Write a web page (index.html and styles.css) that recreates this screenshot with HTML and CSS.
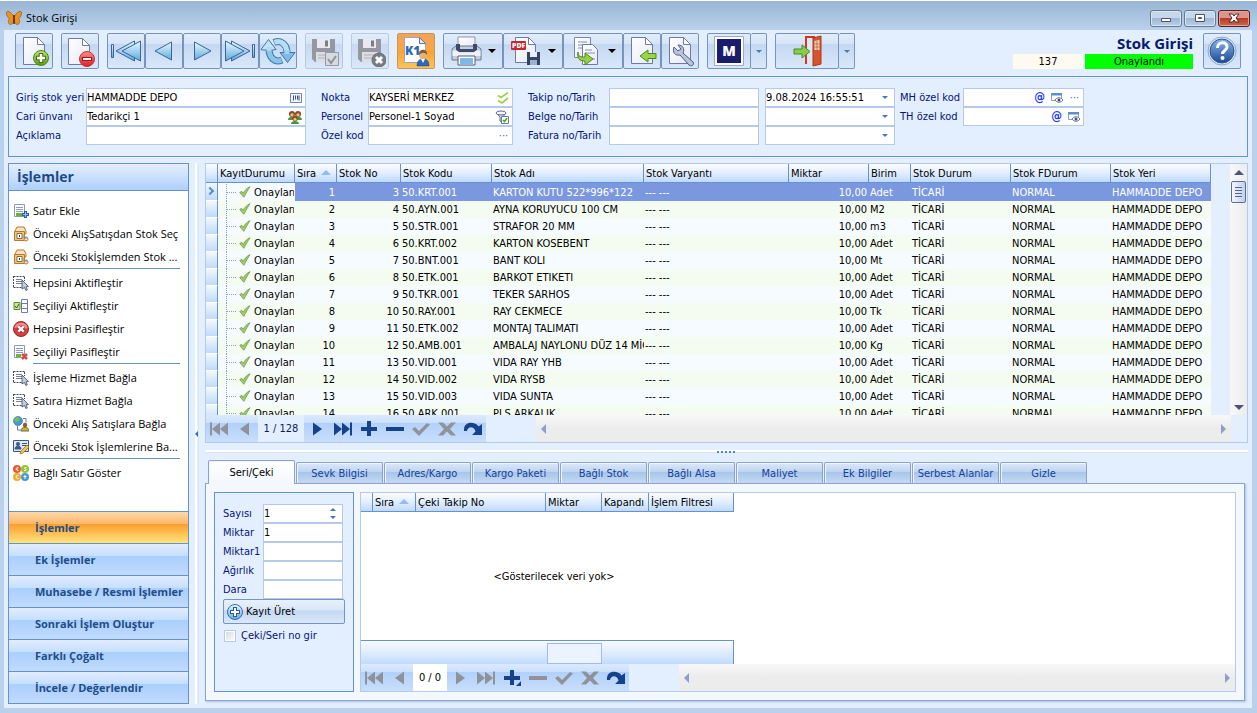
FILE: index.html
```html
<!DOCTYPE html>
<html lang="tr">
<head>
<meta charset="utf-8">
<title>Stok Girişi</title>
<link rel="stylesheet" href="styles.css">
</head>
<body>
<svg class="sprite" width="0" height="0" aria-hidden="true">
  <defs>
    <linearGradient id="gBlue" x1="0" y1="0" x2="0" y2="1"><stop offset="0" stop-color="#e9f8ff"/><stop offset="1" stop-color="#5faadb"/></linearGradient>
    <linearGradient id="gPage" x1="0" y1="0" x2="1" y2="1"><stop offset="0" stop-color="#fff"/><stop offset="1" stop-color="#e6e9f6"/></linearGradient>
    <linearGradient id="gGreen" x1="0" y1="0" x2="0" y2="1"><stop offset="0" stop-color="#c3e676"/><stop offset="1" stop-color="#5c9a14"/></linearGradient>
    <linearGradient id="gRed" x1="0" y1="0" x2="0" y2="1"><stop offset="0" stop-color="#ff8f84"/><stop offset="1" stop-color="#d91f28"/></linearGradient>
    <linearGradient id="gHelp" x1="0" y1="0" x2="0" y2="1"><stop offset="0" stop-color="#8cb4e6"/><stop offset="1" stop-color="#1b4a96"/></linearGradient>
  </defs>
  <symbol id="new" viewBox="0 0 32 32"><path d="M5.500 2.500h14l7 7v20h-21z" fill="url(#gPage)" stroke="#6d7ba6"/><path d="M19.500 2.500v7h7z" fill="#fff" stroke="#6d7ba6"/><circle cx="23" cy="23" r="7.500" fill="url(#gGreen)" stroke="#4f8512"/><path d="M23 18v10M18 23h10" stroke="#3f7012" stroke-width="4.500"/><path d="M23 19v8M19 23h8" stroke="#fff" stroke-width="2.500"/></symbol>
  <symbol id="del" viewBox="0 0 32 32"><path d="M4.500 3.500h14l7 7v19h-21z" fill="url(#gPage)" stroke="#6d7ba6"/><path d="M18.500 3.500v7h7z" fill="#fff" stroke="#6d7ba6"/><circle cx="23" cy="24" r="7.500" fill="url(#gRed)" stroke="#cf2f38"/><path d="M18 24h10" stroke="#a2141c" stroke-width="4"/><path d="M19 24h8" stroke="#fff" stroke-width="2"/></symbol>
  <symbol id="first" viewBox="0 0 36 32"><g fill="url(#gBlue)" stroke="#38649c"><path d="M3.500 9.500h2v13h-2z"/><path d="M26.500 6v20L8 16z"/><path d="M32.500 6v20L14 16z"/></g></symbol>
  <symbol id="prev" viewBox="0 0 36 32"><path d="M25.500 7v18L9 16z" fill="url(#gBlue)" stroke="#38649c"/></symbol>
  <symbol id="sync" viewBox="0 0 36 32"><g fill="none"><path d="M14 7.500c7-3 13 2 13 10" stroke="#3f78ad" stroke-width="7"/><path d="M22 25c-7 3-13-2-13-11" stroke="#3f78ad" stroke-width="7"/><path d="M14.500 7.300c6.500-2.500 12.500 2 12.500 11" stroke="#b9def3" stroke-width="5"/><path d="M21.500 25.200c-6.500 2.500-12.500-2-12.500-12" stroke="#8cc4e6" stroke-width="5"/></g><path d="M8.500 4.500l7.500 10-3.500.5H3l-2-.5z" fill="#c3e4f6" stroke="#3f78ad"/><path d="M27.500 27.500l-7.500-10h15z" fill="#7dbbe2" stroke="#3f78ad"/><path d="M6.500 12h5v4h-5z" fill="#b4dbf1"/><path d="M24.500 15h5v4h-5z" fill="#a4d1ec"/></symbol>
  <symbol id="floppy" viewBox="0 0 32 32"><path d="M4 4h23v23H7l-3-3z" fill="#8d8f96"/><path d="M9 4h13v9H9z" fill="#e9eaee"/><path d="M17 5.500h3v6h-3z" fill="#70727a"/><path d="M8 17h16v10H8z" fill="#dcdde2"/><path d="M10 20h12M10 23h12" stroke="#a9abb3"/></symbol>
  <symbol id="print" viewBox="0 0 32 32"><path d="M8 2h17v12H8z" fill="url(#gPage)" stroke="#8b97b6"/><path d="M2 14l4-3h21l4 3v11H2z" fill="#c3cddd" stroke="#6b7894"/><path d="M6 9h4v5h13V9h4v6l-3 2H9l-3-2z" fill="#3d4a6b"/><path d="M2.500 15.500h4l3 2h14l3-2h4v5.500h-28z" fill="#eef2f8"/><path d="M8 21h17v9H8z" fill="#fff" stroke="#4e5d80"/><path d="M10 23h13v6H10z" fill="#7cb8e8"/></symbol>
  <symbol id="copy" viewBox="0 0 32 32"><path d="M4.500 2.500h16v20h-16z" fill="url(#gPage)" stroke="#7886ac"/><path d="M8 7h9M8 10h7M8 13h7" stroke="#8290b5"/><path d="M12.500 9.500h10l5 5v15h-15z" fill="url(#gPage)" stroke="#6d7ba6"/><path d="M15 15h7M15 18h10M20 24h5" stroke="#8290b5"/><path d="M8 17c0 5 3 5 7 5v-4l8 6-8 6v-4c-6 0-8-3-7-9z" fill="#96cf45" stroke="#4d8a16"/></symbol>
  <symbol id="import" viewBox="0 0 32 32"><path d="M5.500 2.500h14l7 7v19h-21z" fill="url(#gPage)" stroke="#6d7ba6"/><path d="M19.500 2.500v7h7z" fill="#fff" stroke="#6d7ba6"/><path d="M14 21l8-6v3.500h8v5h-8V27z" fill="#9bd44c" stroke="#4d8a16"/></symbol>
  <symbol id="wrench" viewBox="0 0 32 32"><path d="M5.500 2.500h14l7 7v19h-21z" fill="url(#gPage)" stroke="#6d7ba6"/><path d="M19.500 2.500v7h7z" fill="#fff" stroke="#6d7ba6"/><path d="M14 10c5 0 7 4 5 8l10 9c2 3-2 5-4 3l-9-10c-5 1-8-3-6-8l4 4 3-2z" fill="#bac5dc" stroke="#4c5c86"/></symbol>
  <symbol id="exit" viewBox="0 0 32 32"><path d="M15 2h9v27h-9z" fill="#dbe8fa"/><path d="M15 29V2h9" fill="none" stroke="#d0391f" stroke-width="2"/><path d="M22 3l8-2v28l-8 2z" fill="#d9522c" stroke="#a9361a"/><path d="M23.500 6l5-1v10h-5z" fill="#f2d6b8"/><path d="M26 6v9M23.500 9h5M23.500 12h5" stroke="#a9361a" stroke-width=".6"/><path d="M3 14h8v-4l8 6.500-8 6.500v-4H3z" fill="#8bcb4b" stroke="#4a8a1c"/></symbol>
  <symbol id="help" viewBox="0 0 32 32"><circle cx="16" cy="16" r="14" fill="#d7e6f8" stroke="#8fa7cb"/><circle cx="16" cy="16" r="12" fill="url(#gHelp)" stroke="#2b5798"/><path d="M11.500 13c0-7 10-6.500 9.500-1 0 3.500-4.500 3.500-4.500 7" fill="none" stroke="#fff" stroke-width="3"/><circle cx="16.500" cy="23" r="2" fill="#fff"/></symbol>
  <symbol id="butterfly" viewBox="0 0 16 16"><path d="M8 7C6 3 2 0 .5 2 0 5 2 8 3.500 8.500 1 11 3 15 5 14.500 7 14 7.500 11 8 9c.5 2 1 5 3 5.500 2 .5 4-3.500 1.500-6C14 8 16 5 15.500 2 14 0 10 3 8 7z" fill="#f0901c" stroke="#8a5116" stroke-width=".6"/><path d="M8 5v9" stroke="#3e2a14" stroke-width="1.500"/></symbol>
  <symbol id="add" viewBox="0 0 16 16"><path d="M1.500 1.500h10v12h-10z" fill="#fff" stroke="#8a97ba"/><path d="M3 4.500h7M3 6.500h7M3 8.500h7" stroke="#8b9bc3"/><path d="M3 10h6v3H3z" fill="#64b437"/><path d="M12.500 8v7M9 11.500h7" stroke="#275fa8" stroke-width="3"/><path d="M12.500 9v5M10 11.500h5" stroke="#8cc0f0"/></symbol>
  <symbol id="box" viewBox="0 0 16 16"><path d="M2 5l2-4h7l2 4v3H2z" fill="#f9e2bd" stroke="#b67a2c"/><path d="M1.500 5.500h10v9h-10z" fill="#f4c57e" stroke="#b67a2c"/><path d="M4 7.500h5v5H4z" fill="#fff" stroke="#8e6a3a"/><path d="M6 9h1v2H6z" fill="#345"/><circle cx="13" cy="13" r="2" fill="#fff0cf" stroke="#b67a2c"/><path d="M11 9v3h3" fill="none" stroke="#6e86b5"/></symbol>
  <symbol id="select" viewBox="0 0 16 16"><path d="M.5 1.500h11M.5 12.500h8M.5 1v12M11.500 2v4" stroke="#3c4661" stroke-dasharray="2 1" fill="none"/><path d="M3 4.500h6M3 6.500h6M3 8.500h6" stroke="#7782a0"/><path d="M9 5l6.500 6.500-2.500.3 1.300 3-1.500.7-1.300-3L9 14z" fill="#c3ccdf" stroke="#3c4661" stroke-width=".8"/></symbol>
  <symbol id="cells" viewBox="0 0 16 16"><path d="M8.500 1.500h6v13h-6zM8.500 5.500h6M8.500 10.500h6" fill="#fff" stroke="#6a7cab"/><path d="M1 4.500h6v7H1z" fill="#cbe59c" stroke="#5d8f22"/><path d="M2 8l1.500 2L6 6" fill="none" stroke="#31600b"/></symbol>
  <symbol id="cross" viewBox="0 0 16 16"><circle cx="8" cy="8" r="7.500" fill="#d83c3c" stroke="#9d2629"/><path d="M1.500 7C2 0 14 0 14.500 7 10 9 6 5 1.500 7z" fill="#ee8d87"/><path d="M5.300 5.300l5.400 5.400M10.700 5.300l-5.400 5.400" stroke="#8d2024" stroke-width="4"/><path d="M5.300 5.300l5.400 5.400M10.700 5.300l-5.400 5.400" stroke="#fff" stroke-width="2.400"/></symbol>
  <symbol id="listdel" viewBox="0 0 16 16"><path d="M1.500 1.500h10v12h-10z" fill="#fff" stroke="#8a97ba"/><path d="M3 4.500h7M3 6.500h7M3 8.500h7" stroke="#8b9bc3"/><path d="M3 10h5v3H3z" fill="#64b437"/><path d="M9 10l5 5M14 10l-5 5" stroke="#d94a4c" stroke-width="2.500"/></symbol>
  <symbol id="globe" viewBox="0 0 16 16"><circle cx="5" cy="5" r="4.500" fill="#4796d8" stroke="#2a65a5" stroke-width=".6"/><path d="M3 1l4 1-1 3-3 1-2-2z" fill="#74c255"/><path d="M10 2.500h3v4M4.500 10v4h3" fill="none" stroke="#627db2"/><circle cx="12" cy="9" r="2.200" fill="#8a5d2e"/><path d="M8 15c0-5 8-5 8 0z" fill="#e7a43c" stroke="#527c2c"/></symbol>
  <symbol id="card" viewBox="0 0 16 16"><path d="M.5 1.500h15v11H.5z" fill="#dbe8fa" stroke="#3c5690"/><circle cx="5" cy="5" r="2" fill="#3c5690"/><path d="M2 10c0-4 6-4 6 0zM9 4.500h5M9 6.500h4" fill="#3c5690" stroke="#3c5690"/><path d="M14 6l2 2-6 6-3 1 1-3z" fill="#f7c545" stroke="#91661a" stroke-width=".7"/></symbol>
  <symbol id="coins" viewBox="0 0 16 16"><circle cx="4" cy="4" r="4" fill="#ea5a32"/><circle cx="12" cy="4" r="4" fill="#91c53c"/><circle cx="4" cy="12" r="4" fill="#edaf31"/><circle cx="12" cy="12" r="4" fill="#4c95d8"/><path d="M5.500 2.500c-3-1-3 4 0 3M3 4h2M13.500 2.500c-3-.5-2 1.500-1 1.500s1 2-1.500 1.500M5.500 10.500c-3-1-3 4 0 3M12 10v4M10.500 11.500h3" fill="none" stroke="#fff"/></symbol>
  <symbol id="check" viewBox="0 0 12 12"><path d="M.7 6.500l2-1.200 1.500 2C6 4 8 2 11 .7 9 3.500 7 7.500 4.800 11.300 3.200 9.500 2 7.800.7 6.500z" fill="#9cd259" stroke="#7d9d5f" stroke-width=".9"/></symbol>
  <symbol id="barcode" viewBox="0 0 12 10"><path d="M.5.5h11v9H.5z" fill="#eef2fb" stroke="#6f86b8"/><path d="M3.500 2.500v5M5.500 2.500v4M7.500 2.500v4M9 2.500v5" stroke="#43507a"/></symbol>
  <symbol id="people" viewBox="0 0 14 14"><path d="M0 10c0-4 6-4 7-1 1-3 7-3 7 1z" fill="#50953a"/><circle cx="4" cy="4" r="3" fill="#8a4c20"/><circle cx="10" cy="4" r="3" fill="#8a4c20"/><circle cx="4" cy="4.800" r="1.600" fill="#f0c08c"/><circle cx="10" cy="4.800" r="1.600" fill="#f0c08c"/><path d="M3 14c0-4 8-4 8 0z" fill="#3f9a2c"/><circle cx="7" cy="8.500" r="2.700" fill="#8a4c20"/><circle cx="7" cy="9.200" r="1.500" fill="#f0c08c"/></symbol>
  <symbol id="checks" viewBox="0 0 12 12"><path d="M1 3.500l3 2 7-5M1 8.500l4 2.500 6-5" fill="none" stroke="#9bd04e" stroke-width="1.700"/></symbol>
  <symbol id="filter" viewBox="0 0 14 14"><path d="M1 3l4 4v4l2 1V8l4-5" fill="#dfe5f0" stroke="#5e6a86"/><ellipse cx="6" cy="3" rx="5" ry="2" fill="#f3f5fa" stroke="#5e6a86"/><path d="M6.500 6.500h7v7h-7z" fill="#fff" stroke="#5e79b4"/><path d="M8 10l1.500 1.500L12 8" fill="none" stroke="#4f9d1f" stroke-width="1.500"/></symbol>
  <symbol id="view" viewBox="0 0 12 10"><path d="M.5 1h10v4M.5 1v6.500H4" fill="none" stroke="#8d9fc2"/><path d="M0 0h11v2.500H0z" fill="#5f8ed0"/><path d="M4 7c2-3 6-3 8 0-2 3-6 3-8 0z" fill="#fff" stroke="#44526f" stroke-width=".8"/><circle cx="8" cy="7" r="1.500" fill="#44526f"/></symbol>
  <symbol id="plusround" viewBox="0 0 16 16"><circle cx="8" cy="8" r="7.500" fill="url(#gBlue)" stroke="#3b6ca8"/><path d="M8 3v10M3 8h10" stroke="#2c5c98" stroke-width="4"/><path d="M8 4v8M4 8h8" stroke="#fff" stroke-width="2"/></symbol>
  <symbol id="n-first" viewBox="0 0 20 16"><path d="M1 1.500h2v13H1zM3 8l8-6.500v13zM11 8l8-6.500v13z" fill="currentColor"/></symbol>
  <symbol id="n-prev" viewBox="0 0 20 16"><path d="M5 8l9-6.500v13z" fill="currentColor"/></symbol>
  <symbol id="n-plus" viewBox="0 0 20 16"><path d="M2 6h6V0h4v6h6v4h-6v5H8v-5H2z" fill="currentColor"/></symbol>
  <symbol id="n-minus" viewBox="0 0 20 16"><path d="M1 6h18v4H1z" fill="currentColor"/></symbol>
  <symbol id="n-ok" viewBox="0 0 20 16"><path d="M1 8l3-2 4 4 8-8 3 1.500L8 15z" fill="currentColor"/></symbol>
  <symbol id="n-x" viewBox="0 0 20 16"><path d="M1 1.500h5l4 4 4-4h5l-6 6.500 6 6.500h-5l-4-4-4 4H1L7 8z" fill="currentColor"/></symbol>
  <symbol id="n-redo" viewBox="0 0 20 16"><path d="M1 10C0 0 12 0 15.500 5.500L19 3v11H9l3.500-3.500C11 5 5 5 4 10z" fill="currentColor"/></symbol>
</svg>

<header class="titlebar">
  <svg class="ico16"><use href="#butterfly"/></svg>
  <span class="window-name">Stok Girişi</span>
  <div class="winbtns">
    <button class="winbtn" aria-label="Küçült"><svg width="12" height="10"><path d="M1.500 5.500h9v3h-9z" fill="#fff" stroke="#4c5263"/></svg></button>
    <button class="winbtn" aria-label="Büyüt"><svg width="12" height="10"><path d="M1.500 1.500h9v7h-9z" fill="#fff" stroke="#4c5263"/><path d="M4.500 4.500h3v1h-3z" fill="none" stroke="#4c5263"/></svg></button>
    <button class="winbtn close" aria-label="Kapat"><svg width="12" height="10"><path d="M1 1h3.500L6 3l1.500-2H11L8 5l3 4H7.500L6 7 4.500 9H1l3-4z" fill="#fff" stroke="#53252a"/></svg></button>
  </div>
</header>

<div class="client">
  <div class="toolbar">
    <div class="tgroup"><button class="tbtn" aria-label="Yeni"><svg class="ico32"><use href="#new"/></svg></button></div>
    <div class="tgroup"><button class="tbtn" aria-label="Sil"><svg class="ico32"><use href="#del"/></svg></button></div>
    <div class="tgroup">
      <button class="tbtn" aria-label="İlk"><svg class="ico36"><use href="#first"/></svg></button>
      <button class="tbtn" aria-label="Önceki"><svg class="ico36"><use href="#prev"/></svg></button>
      <button class="tbtn" aria-label="Sonraki"><svg class="ico36 flip"><use href="#prev"/></svg></button>
      <button class="tbtn" aria-label="Son"><svg class="ico36 flip"><use href="#first"/></svg></button>
      <button class="tbtn" aria-label="Yenile"><svg class="ico36"><use href="#sync"/></svg></button>
    </div>
    <div class="tgroup"><button class="tbtn off" aria-label="Onayla"><svg class="ico32" viewBox="0 0 32 32"><use href="#floppy" width="32" height="32"/><path d="M17.500 17.500h13v13h-13z" fill="#d5d8de" stroke="#8e9097"/><path d="M20 24l3 4 5-7" fill="none" stroke="#85888f" stroke-width="2"/></svg></button></div>
    <div class="tgroup"><button class="tbtn off" aria-label="Onay iptal"><svg class="ico32" viewBox="0 0 32 32"><use href="#floppy" width="32" height="32"/><circle cx="25" cy="25" r="7" fill="#6d7077" stroke="#5c5e65"/><path d="M22 22l6 6M28 22l-6 6" stroke="#fff" stroke-width="3"/></svg></button></div>
    <div class="tgroup"><button class="tbtn on" aria-label="K1"><svg class="ico32" viewBox="0 0 32 32"><path d="M4.500 2.500h15l6 6v19h-21z" fill="#fff" stroke="#9aa6c6"/><path d="M19.500 2.500v6h6z" fill="#e3e8f6" stroke="#5f77ab"/><text class="k1-text" x="5" y="20">K1</text><path d="M17 31c0-5 2-7 6-7s6 2 6 7z" fill="#2f68b5" stroke="#1d478a" stroke-width=".5"/><path d="M21 24l2 4 2-4z" fill="#fff"/><circle cx="23" cy="20" r="4" fill="#e2b37c"/><path d="M19 20c-1-7 9-7 8 0-2-3-5-3-8 0z" fill="#8b5a2a"/></svg></button></div>
    <div class="tgroup">
      <button class="tbtn wide" aria-label="Yazdır"><svg class="ico32"><use href="#print"/></svg><i class="down big"></i></button>
      <button class="tbtn wide" aria-label="PDF"><svg class="ico32" viewBox="0 0 32 32"><path d="M5.500 2.500h13l7 7v18h-20z" fill="url(#gPage)" stroke="#6d7ba6"/><path d="M18.500 2.500v7h7z" fill="#fff" stroke="#6d7ba6"/><rect x="1" y="6" width="15" height="9" rx="1" fill="#cc242b"/><text class="pdf-text" x="2" y="13">PDF</text><path d="M17 17h13v13H17z" fill="#364264"/><path d="M20 17h7v5h-7z" fill="#e8ecf6"/><path d="M20 25h7v5h-7z" fill="#9fb0cf"/></svg><i class="down big"></i></button>
      <button class="tbtn wide" aria-label="Kopyala"><svg class="ico32"><use href="#copy"/></svg><i class="down big"></i></button>
      <button class="tbtn" aria-label="İçeri al"><svg class="ico32"><use href="#import"/></svg></button>
      <button class="tbtn" aria-label="Ayarlar"><svg class="ico32"><use href="#wrench"/></svg></button>
    </div>
    <div class="tgroup"><button class="tbtn split-main" aria-label="M"><svg class="ico32" viewBox="0 0 32 32"><path d="M1.500 1.500h29v29h-29z" fill="#fff" stroke="#9aaccb"/><path d="M4 4h24v24H4z" fill="#1a1c6e"/><text class="m-text" x="16" y="21" text-anchor="middle">M</text></svg></button><button class="tbtn split" aria-label="M seçenekleri"><i class="down"></i></button></div>
    <div class="tgroup"><button class="tbtn split-wide" aria-label="Çıkış"><svg class="ico32"><use href="#exit"/></svg></button><button class="tbtn split" aria-label="Çıkış seçenekleri"><i class="down"></i></button></div>
    <div class="status">
      <h1 class="status-title">Stok Girişi</h1>
      <div class="status-row"><span class="status-no">137</span><span class="status-ok">Onaylandı</span></div>
    </div>
    <button class="tbtn" aria-label="Yardım"><svg class="ico32"><use href="#help"/></svg></button>
  </div>

  <form class="form">
    <div class="fgroup g1">
      <label for="f1">Giriş stok yeri</label><div class="field"><input id="f1" value="HAMMADDE DEPO"><svg width="12" height="10"><use href="#barcode"/></svg></div>
      <label for="f2">Cari ünvanı</label><div class="field"><input id="f2" value="Tedarikçi 1"><svg width="14" height="14"><use href="#people"/></svg></div>
      <label for="f3">Açıklama</label><div class="field"><input id="f3"></div>
    </div>
    <div class="fgroup g2">
      <label for="f4">Nokta</label><div class="field"><input id="f4" value="KAYSERİ MERKEZ"><svg width="12" height="12"><use href="#checks"/></svg></div>
      <label for="f5">Personel</label><div class="field"><input id="f5" value="Personel-1 Soyad"><svg width="14" height="14"><use href="#filter"/></svg></div>
      <label for="f6">Özel kod</label><div class="field"><input id="f6"><button type="button" class="dots" aria-label="Seç">···</button></div>
    </div>
    <div class="fgroup g3">
      <label for="f7">Takip no/Tarih</label><div class="field"><input id="f7"></div><div class="field"><input aria-label="Takip tarihi" value="9.08.2024 16:55:51"><button type="button" class="drop" aria-label="Takvim"><i class="down"></i></button></div>
      <label for="f8">Belge no/Tarih</label><div class="field"><input id="f8"></div><div class="field"><input aria-label="Belge tarihi"><button type="button" class="drop" aria-label="Takvim"><i class="down"></i></button></div>
      <label for="f9">Fatura no/Tarih</label><div class="field"><input id="f9"></div><div class="field"><input aria-label="Fatura tarihi"><button type="button" class="drop" aria-label="Takvim"><i class="down"></i></button></div>
    </div>
    <div class="fgroup g4">
      <label for="f10">MH özel kod</label><div class="field"><input id="f10"><span class="at">@</span><svg width="12" height="10"><use href="#view"/></svg><button type="button" class="dots" aria-label="Seç">···</button></div>
      <label for="f11">TH özel kod</label><div class="field"><input id="f11"><span class="at">@</span><svg width="12" height="10"><use href="#view"/></svg></div>
    </div>
  </form>

  <div class="workspace">
    <aside class="side">
      <h2 class="side-head">İşlemler</h2>
      <div class="side-list">
        <button class="act"><svg class="ico16"><use href="#add"/></svg>Satır Ekle</button>
        <button class="act"><svg class="ico16"><use href="#box"/></svg>Önceki AlışSatışdan Stok Seç</button>
        <button class="act"><svg class="ico16"><use href="#box"/></svg>Önceki Stokİşlemden Stok ...</button>
        <hr>
        <button class="act"><svg class="ico16"><use href="#select"/></svg>Hepsini Aktifleştir</button>
        <button class="act"><svg class="ico16"><use href="#cells"/></svg>Seçiliyi Aktifleştir</button>
        <button class="act"><svg class="ico16"><use href="#cross"/></svg>Hepsini Pasifleştir</button>
        <button class="act"><svg class="ico16"><use href="#listdel"/></svg>Seçiliyi Pasifleştir</button>
        <hr>
        <button class="act"><svg class="ico16"><use href="#select"/></svg>İşleme Hizmet Bağla</button>
        <button class="act"><svg class="ico16"><use href="#select"/></svg>Satıra Hizmet Bağla</button>
        <button class="act"><svg class="ico16"><use href="#globe"/></svg>Önceki Alış Satışlara Bağla</button>
        <button class="act"><svg class="ico16"><use href="#card"/></svg>Önceki Stok İşlemlerine Ba...</button>
        <hr>
        <button class="act"><svg class="ico16"><use href="#coins"/></svg>Bağlı Satır Göster</button>
      </div>
      <nav class="side-nav">
        <button class="navbtn current">İşlemler</button>
        <button class="navbtn">Ek İşlemler</button>
        <button class="navbtn">Muhasebe / Resmi İşlemler</button>
        <button class="navbtn">Sonraki İşlem Oluştur</button>
        <button class="navbtn">Farklı Çoğalt</button>
        <button class="navbtn">İncele / Değerlendir</button>
      </nav>
    </aside>
    <div class="vsplit"><i class="grip-left"></i></div>

    <main class="main">
      <section class="grid">
        <div class="grid-view">
          <div class="grid-rows">
            <table class="stock">
              <colgroup><col class="c-ind"><col class="c-kay"><col class="c-sira"><col class="c-no"><col class="c-kod"><col class="c-adi"><col class="c-var"><col class="c-mik"><col class="c-bir"><col class="c-100"><col class="c-100"><col class="c-100"></colgroup>
              <thead><tr><th></th><th>KayıtDurumu</th><th>Sıra <i class="sort"></i></th><th>Stok No</th><th>Stok Kodu</th><th>Stok Adı</th><th>Stok Varyantı</th><th>Miktar</th><th>Birim</th><th>Stok Durum</th><th>Stok FDurum</th><th>Stok Yeri</th></tr></thead>
              <tbody>
                <tr class="sel"><td><i class="chev"></i></td><td><svg><use href="#check"/></svg>Onaylandı</td><td>1</td><td>3</td><td>50.KRT.001</td><td>KARTON KUTU 522*996*122</td><td>--- ---</td><td>10,00</td><td>Adet</td><td>TİCARİ</td><td>NORMAL</td><td>HAMMADDE DEPO</td></tr>
                <tr><td></td><td><svg><use href="#check"/></svg>Onaylandı</td><td>2</td><td>4</td><td>50.AYN.001</td><td>AYNA KORUYUCU 100 CM</td><td>--- ---</td><td>10,00</td><td>M2</td><td>TİCARİ</td><td>NORMAL</td><td>HAMMADDE DEPO</td></tr>
                <tr><td></td><td><svg><use href="#check"/></svg>Onaylandı</td><td>3</td><td>5</td><td>50.STR.001</td><td>STRAFOR 20 MM</td><td>--- ---</td><td>10,00</td><td>m3</td><td>TİCARİ</td><td>NORMAL</td><td>HAMMADDE DEPO</td></tr>
                <tr><td></td><td><svg><use href="#check"/></svg>Onaylandı</td><td>4</td><td>6</td><td>50.KRT.002</td><td>KARTON KOSEBENT</td><td>--- ---</td><td>10,00</td><td>Adet</td><td>TİCARİ</td><td>NORMAL</td><td>HAMMADDE DEPO</td></tr>
                <tr><td></td><td><svg><use href="#check"/></svg>Onaylandı</td><td>5</td><td>7</td><td>50.BNT.001</td><td>BANT KOLI</td><td>--- ---</td><td>10,00</td><td>Mt</td><td>TİCARİ</td><td>NORMAL</td><td>HAMMADDE DEPO</td></tr>
                <tr><td></td><td><svg><use href="#check"/></svg>Onaylandı</td><td>6</td><td>8</td><td>50.ETK.001</td><td>BARKOT ETIKETI</td><td>--- ---</td><td>10,00</td><td>Adet</td><td>TİCARİ</td><td>NORMAL</td><td>HAMMADDE DEPO</td></tr>
                <tr><td></td><td><svg><use href="#check"/></svg>Onaylandı</td><td>7</td><td>9</td><td>50.TKR.001</td><td>TEKER SARHOS</td><td>--- ---</td><td>10,00</td><td>Adet</td><td>TİCARİ</td><td>NORMAL</td><td>HAMMADDE DEPO</td></tr>
                <tr><td></td><td><svg><use href="#check"/></svg>Onaylandı</td><td>8</td><td>10</td><td>50.RAY.001</td><td>RAY CEKMECE</td><td>--- ---</td><td>10,00</td><td>Tk</td><td>TİCARİ</td><td>NORMAL</td><td>HAMMADDE DEPO</td></tr>
                <tr><td></td><td><svg><use href="#check"/></svg>Onaylandı</td><td>9</td><td>11</td><td>50.ETK.002</td><td>MONTAJ TALIMATI</td><td>--- ---</td><td>10,00</td><td>Adet</td><td>TİCARİ</td><td>NORMAL</td><td>HAMMADDE DEPO</td></tr>
                <tr><td></td><td><svg><use href="#check"/></svg>Onaylandı</td><td>10</td><td>12</td><td>50.AMB.001</td><td>AMBALAJ NAYLONU DÜZ 14 MİC</td><td>--- ---</td><td>10,00</td><td>Kg</td><td>TİCARİ</td><td>NORMAL</td><td>HAMMADDE DEPO</td></tr>
                <tr><td></td><td><svg><use href="#check"/></svg>Onaylandı</td><td>11</td><td>13</td><td>50.VID.001</td><td>VIDA RAY YHB</td><td>--- ---</td><td>10,00</td><td>Adet</td><td>TİCARİ</td><td>NORMAL</td><td>HAMMADDE DEPO</td></tr>
                <tr><td></td><td><svg><use href="#check"/></svg>Onaylandı</td><td>12</td><td>14</td><td>50.VID.002</td><td>VIDA RYSB</td><td>--- ---</td><td>10,00</td><td>Adet</td><td>TİCARİ</td><td>NORMAL</td><td>HAMMADDE DEPO</td></tr>
                <tr><td></td><td><svg><use href="#check"/></svg>Onaylandı</td><td>13</td><td>15</td><td>50.VID.003</td><td>VIDA SUNTA</td><td>--- ---</td><td>10,00</td><td>Adet</td><td>TİCARİ</td><td>NORMAL</td><td>HAMMADDE DEPO</td></tr>
                <tr><td></td><td><svg><use href="#check"/></svg>Onaylandı</td><td>14</td><td>16</td><td>50.ARK.001</td><td>PLS ARKALIK</td><td>--- ---</td><td>10,00</td><td>Adet</td><td>TİCARİ</td><td>NORMAL</td><td>HAMMADDE DEPO</td></tr>
              </tbody>
            </table>
          </div>
          <div class="vscroll"><i class="up"></i><div class="thumb"></div><i class="down dark"></i></div>
        </div>
        <div class="grid-foot">
          <div class="recnav">
            <button disabled aria-label="İlk"><svg><use href="#n-first"/></svg></button><button disabled aria-label="Önceki"><svg><use href="#n-prev"/></svg></button><span class="recpos">1 / 128</span><button aria-label="Sonraki"><svg class="flip"><use href="#n-prev"/></svg></button><button aria-label="Son"><svg class="flip"><use href="#n-first"/></svg></button><button aria-label="Ekle"><svg><use href="#n-plus"/></svg></button><button aria-label="Sil"><svg><use href="#n-minus"/></svg></button><button disabled aria-label="Kaydet"><svg><use href="#n-ok"/></svg></button><button disabled aria-label="Vazgeç"><svg><use href="#n-x"/></svg></button><button aria-label="Yenile"><svg><use href="#n-redo"/></svg></button>
          </div>
          <div class="hscroll"><i class="left"></i><i class="right"></i></div>
        </div>
      </section>

      <div class="hsplit"><i class="grip"></i></div>

      <section class="detail">
        <div class="tabs" role="tablist">
          <button class="tab active" role="tab">Seri/Çeki</button><button class="tab" role="tab">Sevk Bilgisi</button><button class="tab" role="tab">Adres/Kargo</button><button class="tab" role="tab">Kargo Paketi</button><button class="tab" role="tab">Bağlı Stok</button><button class="tab" role="tab">Bağlı Alsa</button><button class="tab" role="tab">Maliyet</button><button class="tab" role="tab">Ek Bilgiler</button><button class="tab" role="tab">Serbest Alanlar</button><button class="tab" role="tab">Gizle</button>
        </div>
        <div class="tabpanel">
          <form class="series">
            <div class="fgroup g5">
              <label for="s1">Sayısı</label><div class="field"><input id="s1" value="1"><span class="spin"><i class="up"></i><i class="down"></i></span></div>
              <label for="s2">Miktar</label><div class="field"><input id="s2" value="1"></div>
              <label for="s3">Miktar1</label><div class="field"><input id="s3"></div>
              <label for="s4">Ağırlık</label><div class="field"><input id="s4"></div>
              <label for="s5">Dara</label><div class="field"><input id="s5"></div>
            </div>
            <button type="button" class="produce"><svg class="ico16"><use href="#plusround"/></svg>Kayıt Üret</button>
            <label class="tick"><input type="checkbox">Çeki/Seri no gir</label>
          </form>
          <div class="grid sub">
            <table class="ceki">
              <colgroup><col class="c-ind"><col class="d-sira"><col class="d-takip"><col class="d-mik"><col class="d-kap"><col class="d-filt"></colgroup>
              <thead><tr><th></th><th>Sıra <i class="sort"></i></th><th>Çeki Takip No</th><th>Miktar</th><th>Kapandı</th><th>İşlem Filtresi</th></tr></thead>
            </table>
            <div class="empty">&lt;Gösterilecek veri yok&gt;</div>
            <div class="sum"><span class="sumbox"></span></div>
            <div class="grid-foot">
              <div class="recnav tight">
                <button disabled aria-label="İlk"><svg><use href="#n-first"/></svg></button><button disabled aria-label="Önceki"><svg><use href="#n-prev"/></svg></button><span class="recpos">0 / 0</span><button disabled aria-label="Sonraki"><svg class="flip"><use href="#n-prev"/></svg></button><button disabled aria-label="Son"><svg class="flip"><use href="#n-first"/></svg></button><button aria-label="Ekle"><svg viewBox="0 0 20 16"><use href="#n-plus" width="20" height="16"/><path d="M19 11v5h-5z" fill="currentColor"/></svg></button><button disabled aria-label="Sil"><svg><use href="#n-minus"/></svg></button><button disabled aria-label="Kaydet"><svg><use href="#n-ok"/></svg></button><button disabled aria-label="Vazgeç"><svg><use href="#n-x"/></svg></button><button aria-label="Yenile"><svg><use href="#n-redo"/></svg></button>
              </div>
              <div class="hscroll"><i class="left"></i><i class="right"></i></div>
            </div>
          </div>
        </div>
      </section>
    </main>
  </div>
</div>
</body>
</html>
```
FILE: styles.css
```css
:root {
  --line: #6593cf;
  --soft: #b5cae8;
  --bg: #e3eefe;
  --navy: #04157b;
  --ui: "DejaVu Sans Condensed", "DejaVu Sans", sans-serif;
  --segoe: "Open Sans", "Noto Sans", sans-serif;
}
* { box-sizing: border-box; }
html { height: 100%; }
body {
  margin: 0;
  min-height: 100%;
  display: flex;
  flex-direction: column;
  padding: 0 5px 5px 4px;
  background: linear-gradient(#98b4d2 0, #b9d1ec 30px, #b9d1ec);
  border-top: 1px solid #fff;
  font: 11px/13px var(--ui);
  color: #000;
}
button, input { font: inherit; color: inherit; margin: 0; padding: 0; }
button { border: 0; background: none; }
.sprite { position: absolute; }
.ico16 { width: 16px; height: 16px; flex: none; }
.ico32 { width: 32px; height: 32px; }
.ico36 { width: 36px; height: 32px; }
.flip { transform: scaleX(-1); }

.titlebar { display: flex; align-items: center; height: 29px; padding: 5px 2px 0; gap: 4px; }
.window-name { font: 11px/16px var(--segoe); flex: 1; }
.winbtns { display: flex; gap: 2px; }
.winbtn {
  width: 32px; height: 17px;
  display: flex; align-items: center; justify-content: center;
  border: 1px solid #66788f; border-radius: 3px;
  box-shadow: inset 0 0 0 1px #d8e5f3;
  background: linear-gradient(#c5d7ea 50%, #9fb8d3 50%, #b9cfe6);
}
.winbtn.close { border-color: #5b1d20; box-shadow: inset 0 0 0 1px #e0a49b; background: linear-gradient(#d9958a 50%, #b93a24 50%, #cb6a50); }

.client { flex: 1; display: flex; flex-direction: column; background: var(--bg); padding: 3px 4px 4px; }
.toolbar { display: flex; gap: 8px; padding: 0 7px; height: 43px; align-items: flex-start; }
.tgroup { display: flex; }
.tbtn {
  width: 38px; height: 36px; flex: none;
  display: flex; align-items: center; justify-content: center;
  border: 1px solid #7794bf; border-radius: 2px;
  background: linear-gradient(#e2edfc 0, #d6e4f7 28%, #c4d7f0 29%, #d9e8fb 100%);
}
.tbtn.off { border-color: #b4c6e0; opacity: .9; }
.tbtn.on { border-color: #c9945a; background: linear-gradient(#f3a35a, #fba63e 50%, #fba134 50%, #fcc35c); }
.tbtn.wide { width: 60px; justify-content: flex-start; padding-left: 6px; gap: 6px; }
.split-main { width: 44px; }
.split-wide { width: 64px; }
.split { width: 16px; border-left: 0; }
.k1-text { font: 800 12px var(--segoe); fill: #2d6ab8; }
.pdf-text { font: 800 7px var(--segoe); fill: #fff; }
.m-text { font: 800 14px var(--segoe); fill: #fff; }
.status { margin-left: auto; display: flex; flex-direction: column; align-items: flex-end; }
.status-title { margin: 0; font: 700 15px/21px var(--segoe); color: #061a6e; }
.status-row { display: flex; gap: 2px; line-height: 15px; text-align: center; }
.status-no { width: 70px; background: #fffaf0; }
.status-ok { width: 108px; background: #0f0; }
.status + .tbtn { margin-left: 2px; }

i { display: inline-block; flex: none; }
.down { border: 3px solid transparent; border-top-color: #4a78b5; border-bottom: 0; }
.down.big { border-width: 4px 4px 0; border-top-color: #000; }
.down.dark { border-width: 5px 5px 0; border-top-color: #4a5578; }
.up { border: 3px solid transparent; border-bottom-color: #4a78b5; border-top: 0; }
.left { border: 5px solid transparent; border-right-color: #8da0cd; border-left: 0; }
.right { border: 5px solid transparent; border-left-color: #8da0cd; border-right: 0; }
.sort { border: 5px solid transparent; border-bottom-color: #8fbcf5; border-top: 0; margin-left: 2px; vertical-align: 2px; }

.form { display: flex; border: 1px solid var(--line); padding: 11px 7px; height: 81px; align-items: flex-start; }
.fgroup { display: grid; grid-auto-rows: 19px; align-items: center; color: var(--navy); }
.g1 { grid-template-columns: 70px 220px; margin-right: 15px; }
.g2 { grid-template-columns: 47px 145px; margin-right: 15px; }
.g3 { grid-template-columns: 81px 150px 130px; margin-right: 5px; }
.g3 > :nth-child(3n) { margin-left: 6px; margin-right: -6px; }
.g4 { grid-template-columns: 63px 121px; margin-left: 6px; }
.fgroup label { white-space: nowrap; }
.field {
  height: 19px; display: flex; align-items: center; gap: 6px;
  background: #fff; border: 1px solid var(--soft); padding-right: 3px; color: #000;
}
.field input { flex: 1; min-width: 0; width: 0; height: 17px; border: 0; padding: 0; background: transparent; outline: 0; }
.field svg { flex: none; }
.field button { line-height: 13px; height: 15px; }
.dots { width: 11px; color: #4a6ea9; }
.drop { width: 12px; display: flex; align-items: center; justify-content: center; }
.at { color: #1c3df0; font: 700 12px/15px var(--ui); }

.workspace { flex: 1; display: flex; padding-top: 6px; }
.side { width: 181px; flex: none; display: flex; flex-direction: column; border: 1px solid var(--line); background: #fff; }
.side-head {
  margin: 0; padding-left: 8px; height: 27px; border-bottom: 1px solid var(--line);
  background: linear-gradient(#e4effe, #aed0fb); font: 700 14px/26px var(--segoe); color: #1d4a87;
}
.side-list { flex: 1; padding: 8px 4px; display: flex; flex-direction: column; overflow: hidden; }
.act { height: 23px; display: flex; align-items: center; gap: 4px; white-space: nowrap; text-align: left; font: 11px/16px var(--segoe); }
.side-list hr { width: 147px; margin: 0 0 2px 20px; border: 0; border-top: 1px solid var(--line); }
.side-nav { display: flex; flex-direction: column; }
.navbtn {
  height: 32px; padding-left: 26px; text-align: left; white-space: nowrap;
  border-top: 1px solid var(--line); color: #204d89; font: 700 11px/16px var(--segoe);
  background: linear-gradient(#e1edfe, #c6dffe 38%, #a9cffd 39%, #c1dbfc);
}
.navbtn.current { background: linear-gradient(#fed8a9, #fdb768 38%, #fc9e2e 39%, #ffe47b); }
.vsplit { width: 16px; flex: none; display: flex; align-items: center; padding-left: 6px; background: linear-gradient(to right, transparent 6px, #fff 6px, #fff 8px, #c9dffb 9px, transparent 10px); }
.grip-left { border: 3px solid transparent; border-right-color: #3a6db5; border-left: 0; }

.main { flex: 1; min-width: 0; display: flex; flex-direction: column; }
.grid { flex: 1; min-height: 0; display: flex; flex-direction: column; border: 1px solid var(--soft); }
.grid-view { flex: 1 1 0; min-height: 0; display: flex; }
.grid-rows { flex: 1 1 0; min-width: 0; overflow: hidden; height: 251px; }
table { border-collapse: separate; border-spacing: 0; table-layout: fixed; }
.stock { width: 1005px; }
.ceki { width: 373px; }
.c-ind { width: 12px; } .c-kay { width: 77px; } .c-sira { width: 42px; } .c-no { width: 64px; }
.c-kod { width: 91px; } .c-adi { width: 152px; } .c-var { width: 145px; } .c-mik { width: 80px; }
.c-bir { width: 42px; } .c-100 { width: 100px; }
.d-sira { width: 43px; } .d-takip { width: 130px; } .d-mik { width: 56px; } .d-kap { width: 47px; } .d-filt { width: 85px; }
th {
  height: 19px; padding: 1px 0 0 2px; text-align: left; font-weight: 400; white-space: nowrap; overflow: hidden;
  border-right: 1px solid var(--line); border-bottom: 1px solid var(--line);
  background: linear-gradient(#fafcff, #e2eefe 50%, #bdd9fd);
}
td { height: 17px; line-height: 17px; padding: 0 2px 0 1px; white-space: nowrap; overflow: hidden; background: #f6fbff; }
tr:nth-child(even) td { background: #f4fcf2; }
td:nth-child(1), tr:nth-child(even) td:nth-child(1) { padding: 0; border-right: 1px solid var(--line); border-bottom: 1px solid #fff; background: linear-gradient(#f2f8ff, #bfdafb); }
td:nth-child(2) { padding: 0; border-right: 1px solid transparent; }
td:nth-child(2)::before { content: ""; display: inline-block; width: 9px; height: 17px; margin: 0 3px 0 8px; border-left: 1px dotted #8aa0cc; background: linear-gradient(to right, #8aa0cc 50%, transparent 50%) 0 8px / 2px 1px repeat-x; vertical-align: top; }
td:nth-child(2) svg { width: 12px; height: 12px; margin: 2px 3px 0 0; vertical-align: top; }
td:nth-child(3), td:nth-child(4), td:nth-child(8) { text-align: right; }
tr.sel td:nth-child(n+3) { background: #7b97e0; color: #fff; }
.chev { width: 6px; height: 6px; border: solid #5b8fd8; border-width: 2px 2px 0 0; transform: rotate(45deg); margin: 5px 0 0 1px; vertical-align: top; }
.vscroll { width: 17px; flex: none; display: flex; flex-direction: column; align-items: center; padding: 6px 1px 5px; background: linear-gradient(to right, #f8f8f8, #ececec); }
.vscroll .up { border-width: 0 5px 5px; border-bottom-color: #4a5578; }
.vscroll .down { margin-top: auto; }
.thumb { width: 15px; height: 22px; margin-top: 6px; border: 1px solid #5c6f9c; border-radius: 2px; background: repeating-linear-gradient(#536590 0 1px, transparent 1px 3px) center / 7px 10px no-repeat, linear-gradient(to right, #f4f8fd, #bed0ea); }
.grid-foot { display: flex; height: 27px; flex: none; background: var(--bg); }
.recnav { display: flex; background: linear-gradient(#dbe9fd 0, #cbe0fe 30%, #b1d1fb 31%, #c9defb 100%); }
.recnav button { width: 26px; display: flex; align-items: center; justify-content: center; color: #15428b; }
.recnav button:disabled { color: #8f9399; }
.recnav svg { width: 20px; height: 16px; }
.recpos { width: 46px; line-height: 27px; text-align: center; background: var(--bg); color: #0c1c5c; }
.tight .recpos { width: 34px; background: #fff; color: #000; }
.hscroll { flex: 1; margin-left: 50px; margin-right: 16px; display: flex; align-items: center; justify-content: space-between; padding: 0 5px; background: linear-gradient(#f8f8f8, #ececec 50%); }

.hsplit { height: 17px; display: flex; justify-content: center; align-items: center; background: linear-gradient(transparent 7px, #fff 7px, #fff 9px, #c9dffb 9px, transparent 10px); }
.grip { width: 19px; height: 2px; background: repeating-linear-gradient(to right, #5585c8 0 2px, transparent 2px 4px); }

.detail { height: 244px; flex: none; display: flex; flex-direction: column; padding: 0 3px 3px 0; }
.tabs { display: flex; align-items: flex-end; gap: 1px; padding-left: 3px; height: 23px; }
.tab {
  width: 87px; height: 21px; border: 1px solid #8aa3cf; border-bottom: 0; border-radius: 2px 2px 0 0; color: #17409a;
  white-space: nowrap; box-shadow: inset 1px 1px 0 #f0f6ff;
  background: linear-gradient(#dce8f8, #bfd4f0 45%, #a7c5eb 46%, #c6d9f3);
}
.tab.active { height: 24px; margin-bottom: -1px; z-index: 1; color: #000; background: linear-gradient(#fff, #f3f7fe); }
.tabpanel { flex: 1; display: flex; gap: 6px; padding: 8px; border: 1px solid #8aa3cf; background: #f3f7fe; box-shadow: 1px 1px 2px #a9bddd; }
.series { width: 140px; flex: none; padding: 11px 8px; border: 1px solid var(--line); background: var(--bg); color: var(--navy); display: flex; flex-direction: column; align-items: flex-start; }
.g5 { grid-template-columns: 40px 80px; }
.spin { width: 12px; display: flex; flex-direction: column; align-items: center; gap: 5px; }
.produce {
  width: 122px; height: 25px; margin-bottom: 5px; display: flex; align-items: center; gap: 3px; padding-left: 3px; color: #000;
  border: 1px solid #7794bf; border-radius: 2px; background: linear-gradient(#e8f1fd, #d9e6f8 45%, #c3d7f1 46%, #dae8fb);
}
.tick { display: flex; align-items: center; gap: 5px; padding-left: 1px; }
.tick input { appearance: none; width: 12px; height: 12px; border: 1px solid var(--soft); background: linear-gradient(135deg, #d3d6da, #fff); box-shadow: inset 0 0 0 1px #fff; }
.sub { background: #fff; min-width: 0; }
.ceki { flex: none; }
.empty { flex: 1; width: 386px; display: flex; align-items: center; justify-content: center; }
.sum { width: 373px; height: 24px; padding: 2px 0 0 186px; border: 1px solid var(--line); border-width: 1px 1px 0 0; background: linear-gradient(#f8fbff, #dfecfe 50%, #c1dbfc); }
.sumbox { display: block; width: 55px; height: 21px; border: 1px solid #9dbde8; background: #eaf3ff; }
.sub .hscroll { margin-right: 0; }
```
